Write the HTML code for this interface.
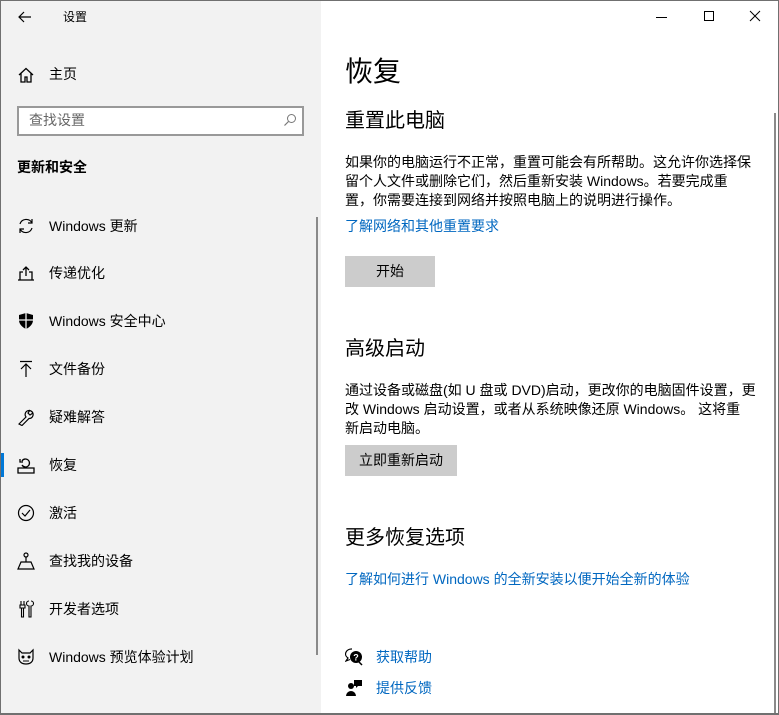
<!DOCTYPE html>
<html><head><meta charset="utf-8"><style>
*{margin:0;padding:0;box-sizing:border-box}
html,body{width:779px;height:715px;overflow:hidden;background:#fff}
body{font-family:"Liberation Sans","Noto Sans CJK SC",sans-serif;color:#000;position:relative}
.a{position:absolute;white-space:nowrap}
#side{position:absolute;left:0;top:0;width:321px;height:715px;background:#f2f2f2}
.it{position:absolute;left:49px;font-size:14px;line-height:20px}
.ic{position:absolute;left:17px;width:18px;height:18px}
.p{font-size:14px;line-height:19px;color:#000}
.lk{color:#0067c0;font-size:14px}
.btn{position:absolute;background:#ccc;font-size:14px;text-align:center}
h1{font-weight:normal}
#bd{position:absolute;left:0;top:0;width:779px;height:715px;border:1px solid #707070;border-bottom:2px solid #707070;pointer-events:none}
</style></head><body>
<div id="side">
<svg class="a" style="left:17px;top:9px" width="16" height="16" viewBox="0 0 16 16"><path d="M14 8H2M7 3L2 8l5 5" fill="none" stroke="#000" stroke-width="1.2"/></svg>
<div class="a" style="left:63px;top:9px;font-size:12px;line-height:16px">设置</div>
<svg class="ic" style="top:66px" viewBox="0 0 18 18"><path d="M2 9L9 2.5 16 9M4 7.5V16h4v-5h2v5h4V7.5" fill="none" stroke="#000" stroke-width="1.3"/></svg>
<div class="it" style="top:64px">主页</div>
<div class="a" style="left:17px;top:106px;width:287px;height:30px;border:2px solid #999;background:#fff"></div>
<div class="a" style="left:29px;top:111px;font-size:14px;line-height:18px;color:#666">查找设置</div>
<svg class="a" style="left:283px;top:113px" width="14" height="14" viewBox="0 0 14 14"><circle cx="8.5" cy="5.5" r="4" fill="none" stroke="#777" stroke-width="1"/><path d="M5.5 8.5L1.5 12.5" stroke="#777" stroke-width="1.2"/></svg>
<div class="a" style="left:17px;top:157px;font-size:14px;font-weight:bold;line-height:20px">更新和安全</div>
<div class="a" style="left:316px;top:217px;width:2px;height:438px;background:#8a8a8a"></div>

<svg class="ic" style="top:217px" viewBox="0 0 18 18"><path d="M3 7A6.5 6.5 0 0 1 15 6M15 11A6.5 6.5 0 0 1 3 12M15 2v4h-4M3 16v-4h4" fill="none" stroke="#000" stroke-width="1.2"/></svg>
<div class="it" style="top:216px">Windows 更新</div>
<svg class="ic" style="top:264px" viewBox="0 0 18 18"><path d="M1 16h16M3 16V8h3M12 8h3v8M9 12V3M6 6l3-3 3 3" fill="none" stroke="#000" stroke-width="1.3"/></svg>
<div class="it" style="top:263px">传递优化</div>
<svg class="ic" style="top:312px" viewBox="0 0 18 18"><path d="M9 1L2 3v5c0 4 3 7 7 9 4-2 7-5 7-9V3z" fill="#000"/><path d="M9 1v16M2 8h14" stroke="#f2f2f2" stroke-width="1.3"/></svg>
<div class="it" style="top:311px">Windows 安全中心</div>
<svg class="ic" style="top:360px" viewBox="0 0 18 18"><path d="M3 1.5h12M9 17V4M4 9l5-5 5 5" fill="none" stroke="#000" stroke-width="1.2"/></svg>
<div class="it" style="top:359px">文件备份</div>
<svg class="ic" style="top:408px" viewBox="0 0 18 18"><path d="M2 16l7-7a4 4 0 1 1 3 1.5l-7 7zM13 2l-2 3 2 2 3-2" fill="none" stroke="#000" stroke-width="1.2"/></svg>
<div class="it" style="top:407px">疑难解答</div>
<div class="a" style="left:0;top:453px;width:4px;height:24px;background:#0078d7"></div>
<svg class="ic" style="top:456px" viewBox="0 0 18 18"><path d="M1 12h16v5H1zM5 9a4 4 0 1 0 0-4M3 3v3h3" fill="none" stroke="#000" stroke-width="1.3"/></svg>
<div class="it" style="top:455px">恢复</div>
<svg class="ic" style="top:504px" viewBox="0 0 18 18"><circle cx="9" cy="9" r="7.5" fill="none" stroke="#000" stroke-width="1.2"/><path d="M5 9l3 3 5-6" fill="none" stroke="#000" stroke-width="1.2"/></svg>
<div class="it" style="top:503px">激活</div>
<svg class="ic" style="top:552px" viewBox="0 0 18 18"><circle cx="9" cy="3" r="2" fill="none" stroke="#000" stroke-width="1.2"/><path d="M9 5v5M1 17h16l-3-7H4z" fill="none" stroke="#000" stroke-width="1.2"/></svg>
<div class="it" style="top:551px">查找我的设备</div>
<svg class="ic" style="top:600px" viewBox="0 0 18 18"><path d="M4 1v4M7 1v4M3 5h5v3H3zM4.5 8v9h2V8M12 1a2 2 0 0 0 0 5v11h2V6a2 2 0 0 0 0-5" fill="none" stroke="#000" stroke-width="1.1"/></svg>
<div class="it" style="top:599px">开发者选项</div>
<svg class="ic" style="top:648px" viewBox="0 0 18 18"><path d="M2 2l3 3h8l3-3v8c0 4-3 6-7 6s-7-2-7-6z" fill="none" stroke="#000" stroke-width="1.2"/><circle cx="6" cy="9" r="1.5"/><circle cx="12" cy="9" r="1.5"/><path d="M6 13h6" stroke="#000"/></svg>
<div class="it" style="top:647px">Windows 预览体验计划</div>
</div>

<svg class="a" style="left:656px;top:10px" width="110" height="14" viewBox="0 0 110 14"><path d="M0 7.5h11" stroke="#000"/><rect x="48.5" y="1.5" width="9" height="9" fill="none" stroke="#000"/><path d="M94 1l10 10M104 1L94 11" stroke="#000"/></svg>
<div class="a" style="left:774px;top:113px;width:2px;height:600px;background:#8a8a8a"></div>

<h1 class="a" style="left:345px;top:53px;font-size:28px;line-height:38px">恢复</h1>
<div class="a" style="left:345px;top:108px;font-size:20px;line-height:27px">重置此电脑</div>
<div class="a p" style="left:345px;top:153px">如果你的电脑运行不正常，重置可能会有所帮助。这允许你选择保<br>留个人文件或删除它们，然后重新安装 Windows。若要完成重<br>置，你需要连接到网络并按照电脑上的说明进行操作。</div>
<div class="a lk" style="left:345px;top:217px;line-height:19px">了解网络和其他重置要求</div>
<div class="btn" style="left:345px;top:256px;width:90px;height:31px;line-height:31px">开始</div>

<div class="a" style="left:345px;top:336px;font-size:20px;line-height:27px">高级启动</div>
<div class="a p" style="left:345px;top:381px">通过设备或磁盘(如 U 盘或 DVD)启动，更改你的电脑固件设置，更<br>改 Windows 启动设置，或者从系统映像还原 Windows。 这将重<br>新启动电脑。</div>
<div class="btn" style="left:345px;top:445px;width:112px;height:31px;line-height:31px">立即重新启动</div>

<div class="a" style="left:345px;top:525px;font-size:20px;line-height:27px">更多恢复选项</div>
<div class="a lk" style="left:345px;top:570px;line-height:19px">了解如何进行 Windows 的全新安装以便开始全新的体验</div>

<svg class="a" style="left:345px;top:648px" width="18" height="18" viewBox="0 0 18 18"><path d="M7 1a6 5 0 0 0-4 9l-2 3 4-1.5" fill="none" stroke="#000" stroke-width="1.2"/><circle cx="11" cy="9" r="6" fill="#000"/><text x="11" y="12.5" font-size="9" font-weight="bold" fill="#fff" text-anchor="middle" font-family="Liberation Sans">?</text><path d="M14 14l3 3" stroke="#000" stroke-width="1.5"/></svg>
<div class="a lk" style="left:376px;top:647px;line-height:20px">获取帮助</div>
<svg class="a" style="left:345px;top:679px" width="18" height="18" viewBox="0 0 18 18"><circle cx="6" cy="7" r="3" fill="#000"/><path d="M1 17a5 5 0 0 1 10 0z" fill="#000"/><path d="M9 1h8v6h-4l-2 2V7H9z" fill="#000"/></svg>
<div class="a lk" style="left:376px;top:678px;line-height:20px">提供反馈</div>
<div id="bd"></div>
</body></html>
